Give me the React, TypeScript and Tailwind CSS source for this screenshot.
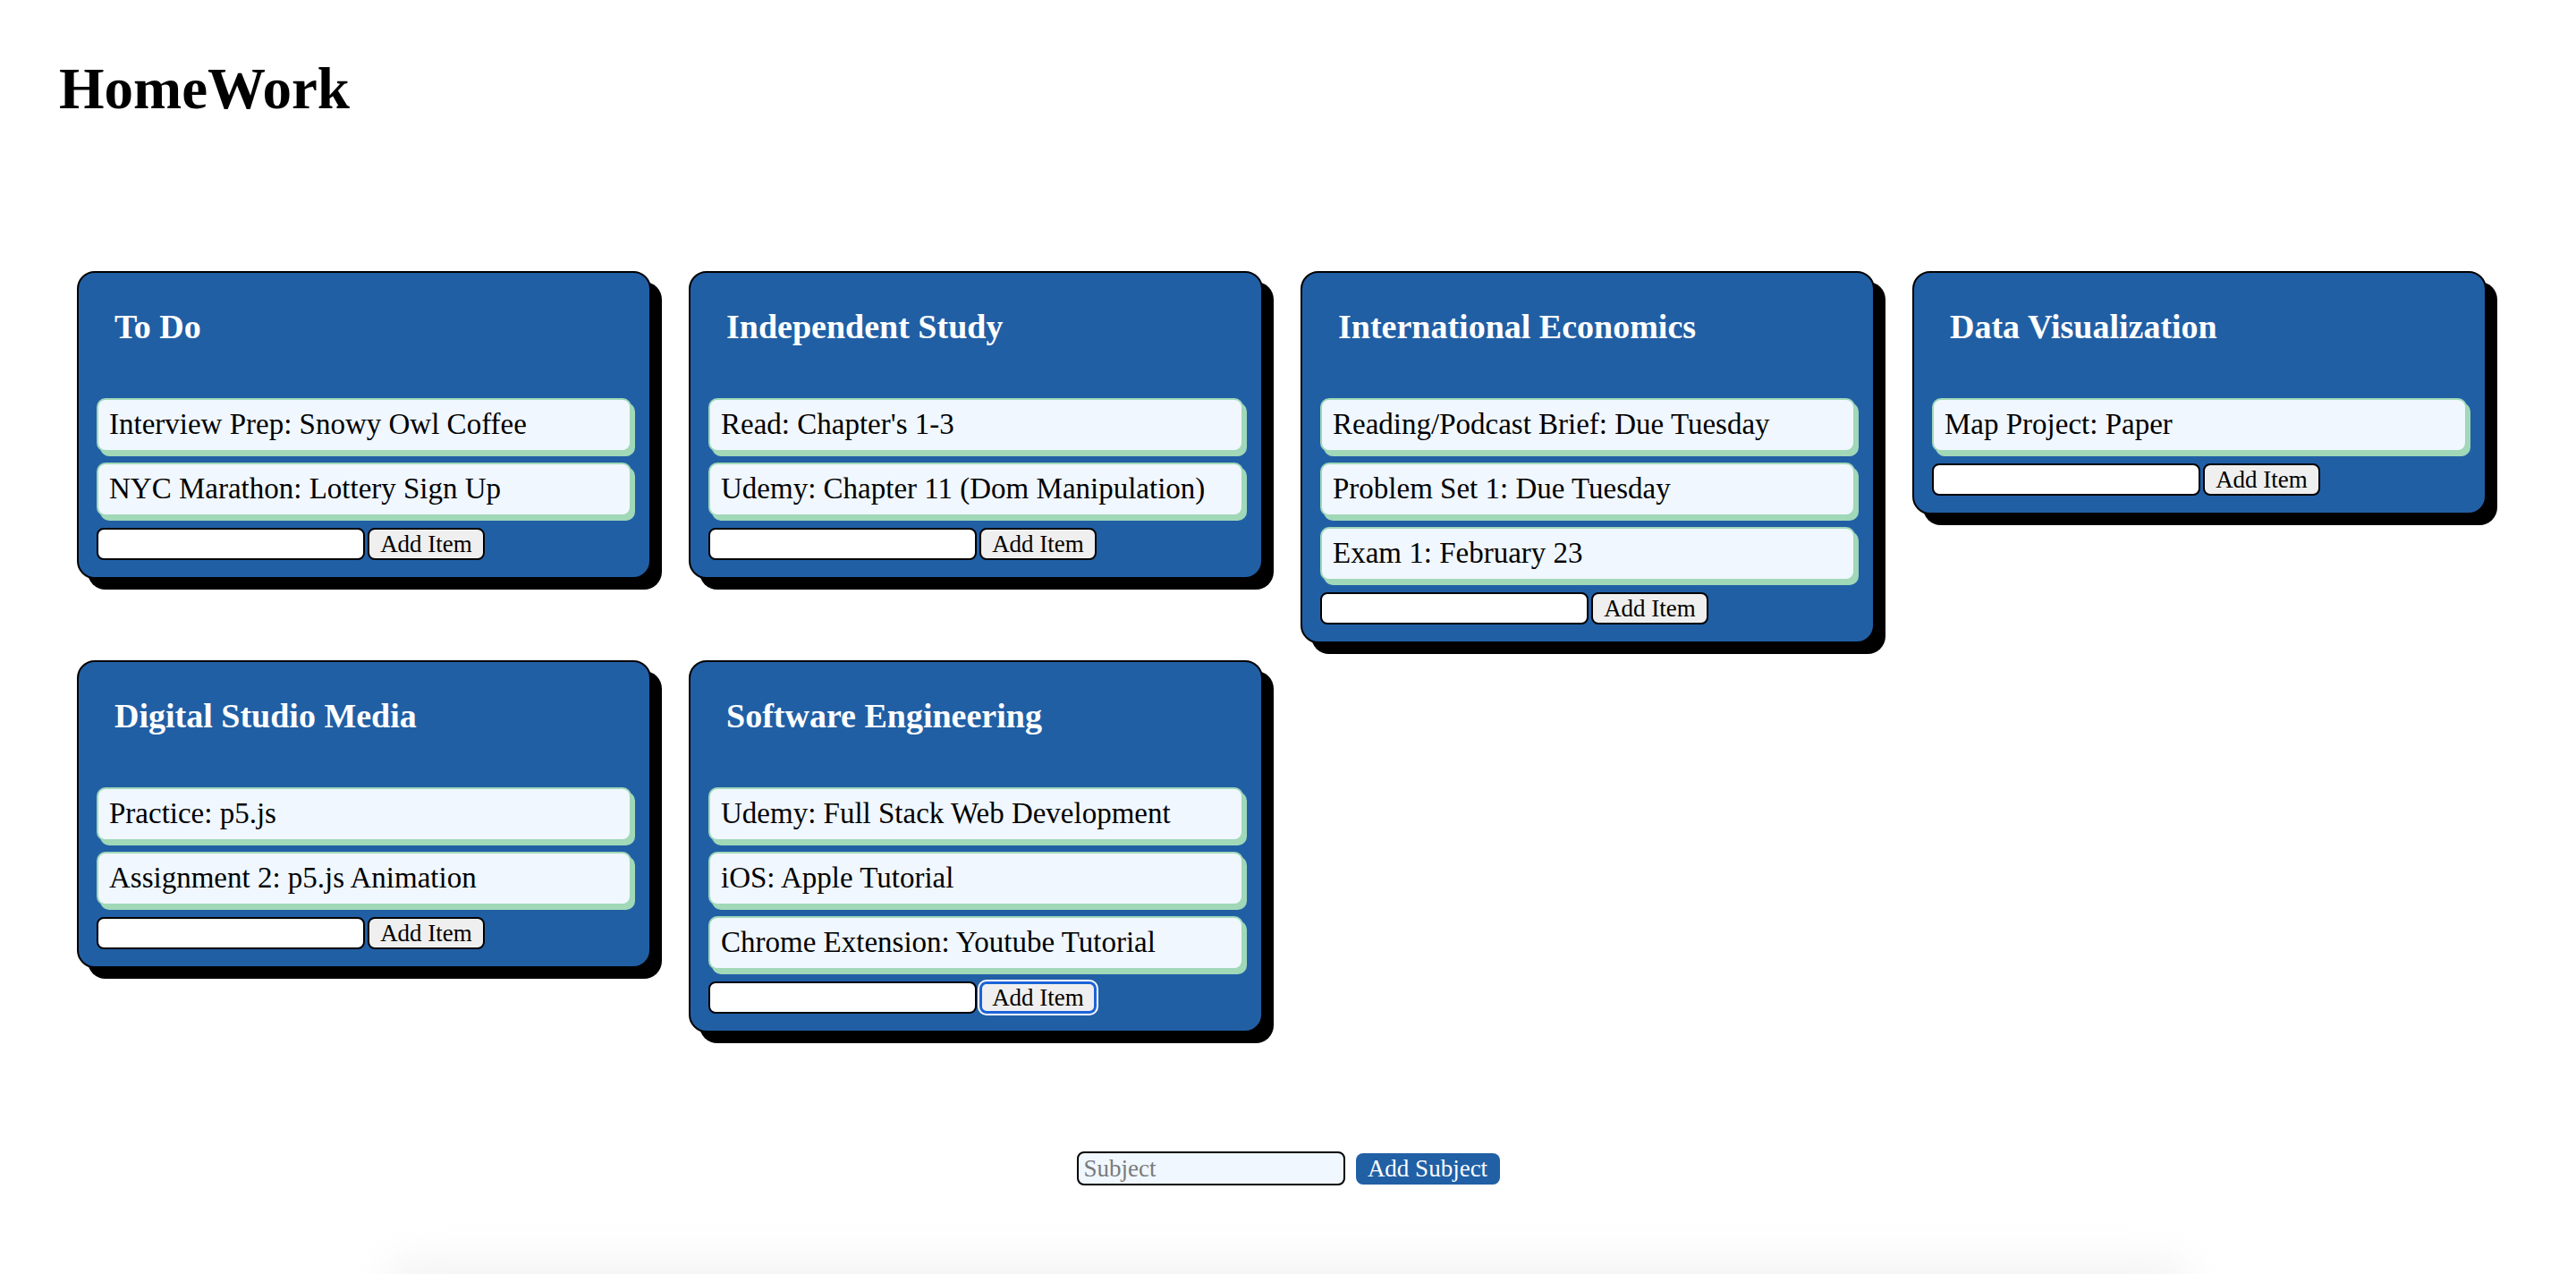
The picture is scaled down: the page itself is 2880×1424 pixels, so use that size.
import React from "react";

type Subject = { title: string; items: string[]; focused?: boolean };

const subjects: Subject[] = [
  { title: "To Do", items: ["Interview Prep: Snowy Owl Coffee", "NYC Marathon: Lottery Sign Up"] },
  { title: "Independent Study", items: ["Read: Chapter's 1-3", "Udemy: Chapter 11 (Dom Manipulation)"] },
  {
    title: "International Economics",
    items: ["Reading/Podcast Brief: Due Tuesday", "Problem Set 1: Due Tuesday", "Exam 1: February 23"],
  },
  { title: "Data Visualization", items: ["Map Project: Paper"] },
  { title: "Digital Studio Media", items: ["Practice: p5.js", "Assignment 2: p5.js Animation"] },
  {
    title: "Software Engineering",
    items: ["Udemy: Full Stack Web Development", "iOS: Apple Tutorial", "Chrome Extension: Youtube Tutorial"],
    focused: true,
  },
];

function Card({ s }: { s: Subject }) {
  return (
    <div className="w-[642px] rounded-[20px] border-2 border-black bg-[#215fa5] px-[20px] pt-[20px] pb-[19px] shadow-[12px_12px_0_0_#000]">
      <h2 className="pl-[20px] pt-[17px] pb-[57px] text-[38px] font-bold leading-[46px] text-white">{s.title}</h2>
      <div className="flex flex-col gap-[12px]">
        {s.items.map((it) => (
          <div
            key={it}
            className="flex h-[60px] items-center rounded-[10px] border-2 border-[#a0d8b8] bg-[#f0f7ff] pl-[12px] text-[33px] text-black shadow-[4px_5px_0_0_#a0d8b8]"
          >
            {it}
          </div>
        ))}
      </div>
      <div className="mt-[13px] flex items-center gap-[3px]">
        <input
          type="text"
          className="h-[36px] w-[300px] rounded-[8px] border-2 border-black bg-white px-2 text-[27px] outline-none"
        />
        {s.focused ? (
          <button className="h-[36px] w-[131px] rounded-[8px] border-[3px] border-[#1c63d8] bg-[#efefef] text-[27px] leading-none text-black shadow-[0_0_0_2px_#ffffff]">
            Add Item
          </button>
        ) : (
          <button className="h-[36px] w-[131px] rounded-[8px] border-2 border-black bg-[#efefef] text-[27px] leading-none text-black">
            Add Item
          </button>
        )}
      </div>
    </div>
  );
}

export default function App() {
  return (
    <div
      className="relative min-h-[1424px] w-full overflow-hidden bg-white text-black"
      style={{ fontFamily: '"Liberation Serif", "Times New Roman", serif' }}
    >
      <h1 className="pl-[66px] pt-[67px] text-[65px] font-bold leading-[64px]">HomeWork</h1>
      <div className="mt-[172px] flex w-[2800px] flex-wrap items-start gap-x-[42px] gap-y-[19px] pl-[86px]">
        {subjects.map((s) => (
          <Card key={s.title} s={s} />
        ))}
      </div>
      <div className="mt-[133px] flex items-center justify-center gap-[12px]">
        <input
          type="text"
          placeholder="Subject"
          className="h-[38px] w-[300px] rounded-[8px] border-2 border-black bg-[#f0f7ff] px-[6px] text-[27px] placeholder:text-[#7a7a7a] outline-none"
        />
        <button className="h-[35px] w-[161px] rounded-[8px] bg-[#2160a5] text-[27px] leading-none text-white">
          Add Subject
        </button>
      </div>
      <div className="pointer-events-none absolute bottom-[-34px] left-[430px] h-[50px] w-[2020px] rounded-full bg-[#f3f3f3] blur-[22px]" />
    </div>
  );
}
